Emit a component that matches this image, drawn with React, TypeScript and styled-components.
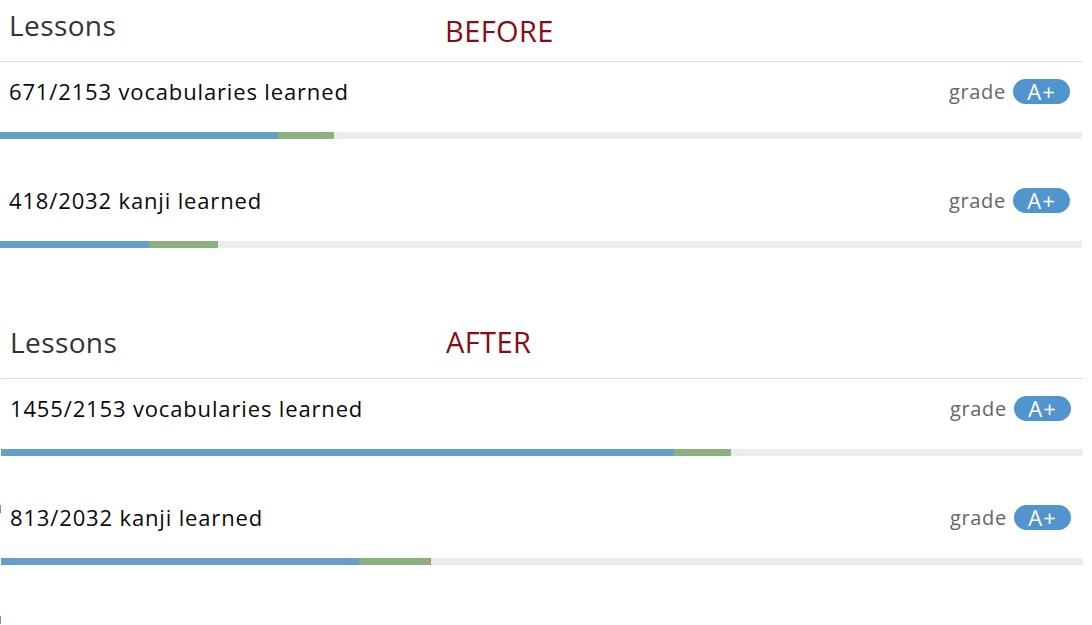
import React from 'react';
import styled, { createGlobalStyle } from 'styled-components';

const GlobalStyle = createGlobalStyle`
  html, body {
    margin: 0;
    padding: 0;
    background: #ffffff;
  }
  body {
    font-family: "Open Sans", "Noto Sans", "DejaVu Sans", sans-serif;
  }
`;

const BAR_WIDTH = 1082;

interface Progress {
  label: string;
  blue: number;
  green: number;
  red?: number;
}

interface Snapshot {
  tag: string;
  tagTop: number;
  shift: number;
  rows: Progress[];
}

const snapshots: Snapshot[] = [
  {
    tag: 'BEFORE',
    tagTop: 5,
    shift: 0,
    rows: [
      { label: '671/2153 vocabularies learned', blue: 278, green: 56 },
      { label: '418/2032 kanji learned', blue: 149, green: 69 },
    ],
  },
  {
    tag: 'AFTER',
    tagTop: -1,
    shift: 1,
    rows: [
      { label: '1455/2153 vocabularies learned', blue: 673, green: 57 },
      { label: '813/2032 kanji learned', blue: 358, green: 71, red: 1.5 },
    ],
  },
];

const Page = styled.div`
  width: 1092px;
  height: 625px;
  overflow: hidden;
`;

const Shot = styled.section<{ last: boolean }>`
  display: flex;
  height: ${props => (props.last ? 308 : 317)}px;
`;

const Panel = styled.div`
  width: ${BAR_WIDTH}px;
`;

const Header = styled.div`
  display: grid;
  grid-template-columns: 436px 1fr;
  align-items: start;
  height: 61px;
  padding-left: 9px;
  border-bottom: 1px solid #dddddd;
  box-sizing: content-box;
`;

const Title = styled.h2`
  margin: 6px 0 0;
  font-size: 28px;
  line-height: 38px;
  font-weight: 400;
  letter-spacing: 0.4px;
  color: #333333;
`;

const Tag = styled.div<{ top: number }>`
  margin-top: ${props => 6 + props.top}px;
  font-size: 29px;
  line-height: 40px;
  color: #8b0a14;
  letter-spacing: 0.4px;
`;

const Row = styled.div`
  display: flex;
  flex-direction: column;
  margin-bottom: 32px;
`;

const RowHead = styled.div`
  display: flex;
  align-items: center;
  justify-content: space-between;
  height: 58px;
  padding: 0 12px 12px 9px;
`;

const Label = styled.div`
  font-size: 22px;
  letter-spacing: 0.85px;
  color: #0a0a0a;
`;

const Grade = styled.div`
  display: flex;
  align-items: center;
  gap: 7px;
  font-size: 20px;
  letter-spacing: 0.7px;
  color: #666666;
`;

const Badge = styled.span`
  display: inline-flex;
  align-items: center;
  justify-content: center;
  width: 57px;
  height: 25px;
  border-radius: 13px;
  background: #5294cc;
  color: #ffffff;
  font-size: 22px;
  letter-spacing: 1px;
`;

const Bar = styled.div`
  display: flex;
  height: 7px;
  background: #ececec;
`;

const Segment = styled.div<{ tone: 'blue' | 'green' | 'red' }>`
  height: 100%;
  flex: none;
  background: ${props =>
    props.tone === 'blue' ? '#64a0c9' : props.tone === 'green' ? '#8ab17e' : '#e4734f'};
`;

const Gutter = styled.div`
  width: 1px;
  flex: none;
  display: flex;
  flex-direction: column;
`;

const Mark = styled.div<{ top: number }>`
  width: 1px;
  height: 8px;
  margin-top: ${props => props.top}px;
  background: #5a9bd0;
`;

const pct = (px: number) => `${(px / BAR_WIDTH) * 100}%`;

const ProgressRow: React.FC<{ row: Progress }> = ({ row }) => (
  <Row>
    <RowHead>
      <Label>{row.label}</Label>
      <Grade>
        grade <Badge>A+</Badge>
      </Grade>
    </RowHead>
    <Bar>
      <Segment tone="blue" style={{ width: pct(row.blue) }} />
      <Segment tone="green" style={{ width: pct(row.green) }} />
      {row.red ? <Segment tone="red" style={{ width: pct(row.red) }} /> : null}
    </Bar>
  </Row>
);

export default function App() {
  return (
    <Page>
      <GlobalStyle />
      {snapshots.map((snap, i) => (
        <Shot key={snap.tag} last={i === snapshots.length - 1}>
          {snap.shift ? (
            <Gutter>
              <Mark top={188} />
              <Mark top={103} />
            </Gutter>
          ) : null}
          <Panel>
            <Header>
              <Title>Lessons</Title>
              <Tag top={snap.tagTop}>{snap.tag}</Tag>
            </Header>
            {snap.rows.map(row => (
              <ProgressRow key={row.label} row={row} />
            ))}
          </Panel>
        </Shot>
      ))}
    </Page>
  );
}
